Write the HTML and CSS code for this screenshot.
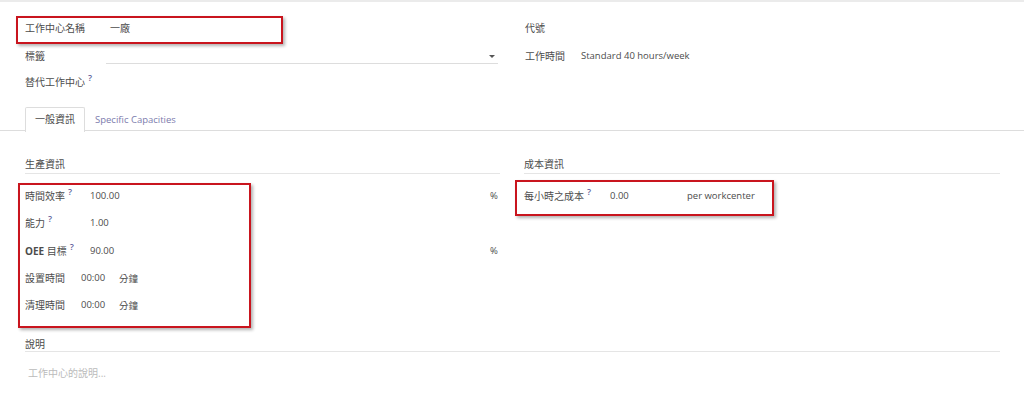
FILE: index.html
```html
<!DOCTYPE html>
<html lang="zh-Hant">
  <head>
    <meta charset="UTF-8" />
    <title>工作中心</title>
    <link rel="stylesheet" href="styles.css">
  </head>
  <body>
    <div class="sheet">
      <div class="head">
        <div class="col">
          <div class="row name-row">
            <div class="label wide">工作中心名稱</div>
            <div class="value">一廠</div>
          </div>
          <div class="row">
            <div class="label wide">標籤</div>
            <div class="select"><span class="caret"></span></div>
          </div>
          <div class="row last">
            <div class="label">替代工作中心<sup>?</sup></div>
          </div>
        </div>
        <div class="col">
          <div class="row">
            <div class="label">代號</div>
          </div>
          <div class="row">
            <div class="label short">工作時間</div>
            <div class="value">Standard 40 hours/week</div>
          </div>
        </div>
      </div>

      <div class="tabs">
        <div class="tab active">一般資訊</div>
        <div class="tab">Specific Capacities</div>
      </div>

      <div class="groups">
        <div class="group">
          <div class="group-title">生產資訊</div>
          <div class="row field">
            <div class="label mid">時間效率<sup>?</sup></div>
            <div class="value grow">100.00</div>
            <div class="unit">%</div>
          </div>
          <div class="row field">
            <div class="label mid">能力<sup>?</sup></div>
            <div class="value grow">1.00</div>
          </div>
          <div class="row field">
            <div class="label mid"><b>OEE</b> 目標<sup>?</sup></div>
            <div class="value grow">90.00</div>
            <div class="unit">%</div>
          </div>
          <div class="row field">
            <div class="label tight">設置時間</div>
            <div class="value time">00:00</div>
            <div class="value">分鐘</div>
          </div>
          <div class="row field">
            <div class="label tight">清理時間</div>
            <div class="value time">00:00</div>
            <div class="value">分鐘</div>
          </div>
        </div>
        <div class="group">
          <div class="group-title">成本資訊</div>
          <div class="row field">
            <div class="label cost">每小時之成本<sup>?</sup></div>
            <div class="value amount">0.00</div>
            <div class="value">per workcenter</div>
          </div>
        </div>
      </div>

      <div class="note">
        <div class="group-title">說明</div>
        <div class="placeholder">工作中心的說明...</div>
      </div>

      <!-- annotation boxes drawn over the form -->
      <div class="mark mark-name"></div>
      <div class="mark mark-prod"></div>
      <div class="mark mark-cost"></div>
    </div>
  </body>
</html>
```

FILE: styles.css
```css
body {
  margin: 0;
  background: #fff;
  font-family: "Open Sans", "Noto Sans CJK TC", sans-serif;
  font-size: 9.5px;
  color: #4c4c4c;
}
.sheet {
  position: relative;
  height: 399px;
  border-top: 2px solid #ebebeb;
  box-sizing: border-box;
}
.label,
.group-title,
.tab.active,
.placeholder {
  font-size: 10px;
}
.head {
  display: flex;
  padding: 11px 24px 0 25px;
}
.col {
  flex: 0 0 500px;
}
.col + .col {
  flex: 1;
}
.row {
  display: flex;
  align-items: center;
  height: 28px;
}
.row.last {
  height: 24px;
}
.label {
  flex: none;
  white-space: nowrap;
}
.label.wide {
  width: 81px;
}
.label.short {
  width: 56px;
}
.label.mid {
  width: 65px;
}
.label.tight {
  width: 56px;
}
.label.cost {
  width: 86px;
}
sup {
  color: #5f5f9c;
  font-size: 9px;
  font-weight: 600;
  margin-left: 3px;
  vertical-align: 5px;
  line-height: 0;
}
.value {
  white-space: nowrap;
}
.name-row .value {
  padding-left: 4px;
  font-size: 10px;
}
.select {
  position: relative;
  width: 392px;
  height: 16px;
  border-bottom: 1px solid #ddd;
}
.caret {
  position: absolute;
  right: 3px;
  top: 8px;
  border-left: 3px solid transparent;
  border-right: 3px solid transparent;
  border-top: 3px solid #555;
}
.tabs {
  display: flex;
  margin-top: 14px;
  padding-left: 25px;
  border-bottom: 1px solid #ddd;
  height: 23px;
}
.tab {
  padding: 0 9px;
  line-height: 23px;
  color: #7c7bad;
  border: 1px solid transparent;
  border-bottom: none;
}
.tab.active {
  color: #4c4c4c;
  background: #fff;
  border-color: #ddd;
  border-radius: 2px 2px 0 0;
  height: 24px;
}
.groups {
  display: flex;
  padding: 26px 24px 0 25px;
}
.group {
  flex: 0 0 475px;
}
.group + .group {
  flex: 1;
  margin-left: 24px;
}
.group-title {
  height: 16px;
  line-height: 15px;
  border-bottom: 1px solid #e5e5e5;
  margin-bottom: 8px;
}
.field {
  height: 27.3px;
}
.value.grow {
  flex: 1;
}
.unit {
  width: 10px;
}
.value.time {
  width: 38px;
}
.value.amount {
  width: 77px;
}
.note {
  margin: 17px 24px 0 25px;
}
.note .group-title {
  line-height: 18px;
  margin-bottom: 13px;
}
.placeholder {
  color: #bbb;
  padding-left: 3px;
}
.mark {
  position: absolute;
  border: 2px solid #c9151e;
  box-shadow: 2px 2px 3px rgba(0, 0, 0, 0.3);
}
.mark-name {
  left: 16px;
  top: 14px;
  width: 263px;
  height: 24px;
}
.mark-prod {
  left: 18px;
  top: 181px;
  width: 229px;
  height: 141px;
}
.mark-cost {
  left: 515px;
  top: 178px;
  width: 255px;
  height: 32px;
}
```
